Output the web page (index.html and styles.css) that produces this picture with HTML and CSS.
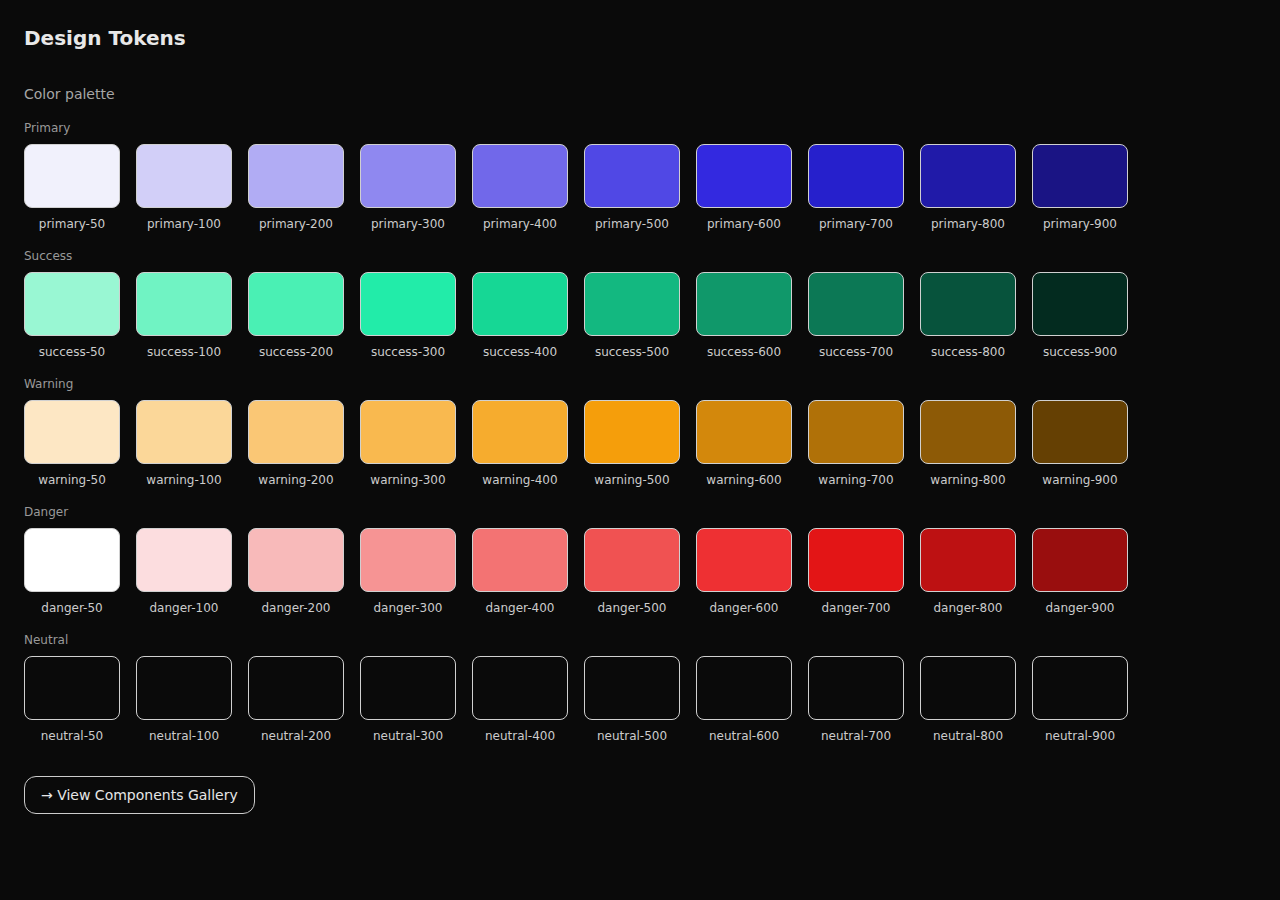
FILE: index.html
```html
<!DOCTYPE html>
<html>
<head>
<meta charset="utf-8">
<title>Design Tokens</title>
<link rel="stylesheet" href="styles.css">
</head>
<body>
<h1 class="title">Design Tokens</h1>
<h2 class="section-title">Color palette</h2>

<div class="group">
  <div class="group-label">Primary</div>
  <div class="row">
    <div class="item"><div class="swatch" style="background:#f1f1fc"></div><div class="name">primary-50</div></div>
    <div class="item"><div class="swatch" style="background:#d2cff8"></div><div class="name">primary-100</div></div>
    <div class="item"><div class="swatch" style="background:#b1acf4"></div><div class="name">primary-200</div></div>
    <div class="item"><div class="swatch" style="background:#8f88f0"></div><div class="name">primary-300</div></div>
    <div class="item"><div class="swatch" style="background:#7168ea"></div><div class="name">primary-400</div></div>
    <div class="item"><div class="swatch" style="background:#5048e5"></div><div class="name">primary-500</div></div>
    <div class="item"><div class="swatch" style="background:#3329e0"></div><div class="name">primary-600</div></div>
    <div class="item"><div class="swatch" style="background:#2620cc"></div><div class="name">primary-700</div></div>
    <div class="item"><div class="swatch" style="background:#201aa8"></div><div class="name">primary-800</div></div>
    <div class="item"><div class="swatch" style="background:#1a1484"></div><div class="name">primary-900</div></div>
  </div>
</div>

<div class="group">
  <div class="group-label">Success</div>
  <div class="row">
    <div class="item"><div class="swatch" style="background:#99f7d3"></div><div class="name">success-50</div></div>
    <div class="item"><div class="swatch" style="background:#70f3c3"></div><div class="name">success-100</div></div>
    <div class="item"><div class="swatch" style="background:#4af0b4"></div><div class="name">success-200</div></div>
    <div class="item"><div class="swatch" style="background:#22eca9"></div><div class="name">success-300</div></div>
    <div class="item"><div class="swatch" style="background:#16d795"></div><div class="name">success-400</div></div>
    <div class="item"><div class="swatch" style="background:#13b880"></div><div class="name">success-500</div></div>
    <div class="item"><div class="swatch" style="background:#10986a"></div><div class="name">success-600</div></div>
    <div class="item"><div class="swatch" style="background:#0c7855"></div><div class="name">success-700</div></div>
    <div class="item"><div class="swatch" style="background:#07533c"></div><div class="name">success-800</div></div>
    <div class="item"><div class="swatch" style="background:#032b1f"></div><div class="name">success-900</div></div>
  </div>
</div>

<div class="group">
  <div class="group-label">Warning</div>
  <div class="row">
    <div class="item"><div class="swatch" style="background:#fde7c4"></div><div class="name">warning-50</div></div>
    <div class="item"><div class="swatch" style="background:#fbd799"></div><div class="name">warning-100</div></div>
    <div class="item"><div class="swatch" style="background:#fac775"></div><div class="name">warning-200</div></div>
    <div class="item"><div class="swatch" style="background:#f9b94f"></div><div class="name">warning-300</div></div>
    <div class="item"><div class="swatch" style="background:#f6ac2e"></div><div class="name">warning-400</div></div>
    <div class="item"><div class="swatch" style="background:#f59e0b"></div><div class="name">warning-500</div></div>
    <div class="item"><div class="swatch" style="background:#d3880c"></div><div class="name">warning-600</div></div>
    <div class="item"><div class="swatch" style="background:#b07108"></div><div class="name">warning-700</div></div>
    <div class="item"><div class="swatch" style="background:#8d5a06"></div><div class="name">warning-800</div></div>
    <div class="item"><div class="swatch" style="background:#654003"></div><div class="name">warning-900</div></div>
  </div>
</div>

<div class="group">
  <div class="group-label">Danger</div>
  <div class="row">
    <div class="item"><div class="swatch" style="background:#ffffff"></div><div class="name">danger-50</div></div>
    <div class="item"><div class="swatch" style="background:#fcdddf"></div><div class="name">danger-100</div></div>
    <div class="item"><div class="swatch" style="background:#f8baba"></div><div class="name">danger-200</div></div>
    <div class="item"><div class="swatch" style="background:#f69494"></div><div class="name">danger-300</div></div>
    <div class="item"><div class="swatch" style="background:#f37373"></div><div class="name">danger-400</div></div>
    <div class="item"><div class="swatch" style="background:#f05252"></div><div class="name">danger-500</div></div>
    <div class="item"><div class="swatch" style="background:#ee3033"></div><div class="name">danger-600</div></div>
    <div class="item"><div class="swatch" style="background:#e31516"></div><div class="name">danger-700</div></div>
    <div class="item"><div class="swatch" style="background:#bd1112"></div><div class="name">danger-800</div></div>
    <div class="item"><div class="swatch" style="background:#990e0e"></div><div class="name">danger-900</div></div>
  </div>
</div>

<div class="group">
  <div class="group-label">Neutral</div>
  <div class="row">
    <div class="item"><div class="swatch neutral"></div><div class="name">neutral-50</div></div>
    <div class="item"><div class="swatch neutral"></div><div class="name">neutral-100</div></div>
    <div class="item"><div class="swatch neutral"></div><div class="name">neutral-200</div></div>
    <div class="item"><div class="swatch neutral"></div><div class="name">neutral-300</div></div>
    <div class="item"><div class="swatch neutral"></div><div class="name">neutral-400</div></div>
    <div class="item"><div class="swatch neutral"></div><div class="name">neutral-500</div></div>
    <div class="item"><div class="swatch neutral"></div><div class="name">neutral-600</div></div>
    <div class="item"><div class="swatch neutral"></div><div class="name">neutral-700</div></div>
    <div class="item"><div class="swatch neutral"></div><div class="name">neutral-800</div></div>
    <div class="item"><div class="swatch neutral"></div><div class="name">neutral-900</div></div>
  </div>
</div>

<a class="gallery-btn" href="#">→ View Components Gallery</a>
</body>
</html>
```

FILE: styles.css
```css
html, body {
  margin: 0;
  background: #0a0a0a;
}
body {
  padding: 24px;
  font-family: "DejaVu Sans", sans-serif;
  color: #e6e6e6;
}
.title {
  margin: 0;
  font-size: 20px;
  line-height: 28px;
  font-weight: bold;
  color: #e8e8e8;
}
.section-title {
  margin: 34px 0 18px;
  font-size: 14px;
  line-height: 17px;
  font-weight: normal;
  color: #a6a6a6;
}
.group {
  margin-bottom: 17px;
}
.group-label {
  font-size: 12px;
  line-height: 15px;
  color: #999999;
  margin-bottom: 8px;
}
.row {
  display: flex;
  gap: 16px;
}
.item {
  width: 96px;
  display: flex;
  flex-direction: column;
  align-items: center;
}
.swatch {
  width: 96px;
  height: 64px;
  box-sizing: border-box;
  border: 1px solid #d0d0d0;
  border-radius: 8px;
}
.swatch.neutral {
  background: #0a0a0a;
}
.name {
  margin-top: 9px;
  font-size: 12px;
  line-height: 15px;
  color: #cccccc;
  white-space: nowrap;
}
.gallery-btn {
  display: inline-block;
  margin-top: 15px;
  padding: 10px 16px;
  font-size: 14px;
  line-height: 16px;
  color: #e6e6e6;
  text-decoration: none;
  border: 1px solid #cccccc;
  border-radius: 12px;
}
```
